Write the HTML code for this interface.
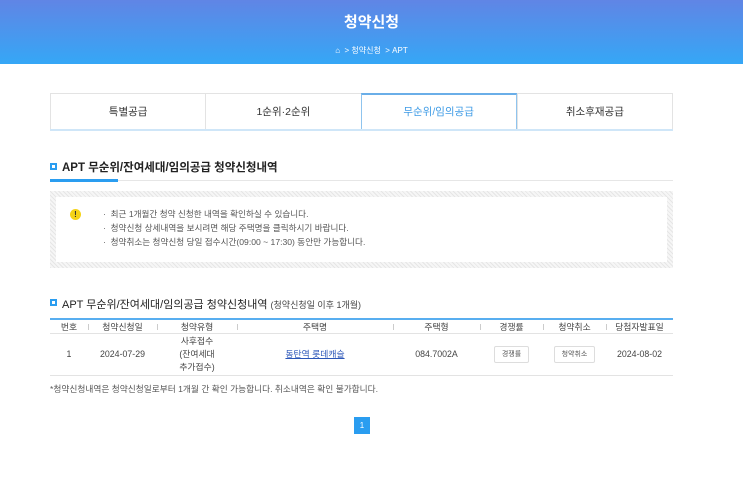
<!DOCTYPE html>
<html><head><meta charset="utf-8"><style>
*{margin:0;padding:0;box-sizing:border-box}
body{width:743px;height:481px;background:#fff;font-family:"Liberation Sans","Noto Sans CJK KR",sans-serif;color:#333;position:relative;overflow:hidden}
.hd{position:absolute;left:0;top:0;width:743px;height:64px;background:linear-gradient(#6085e5,#35a7f6)}
.hd h1{position:absolute;top:11px;width:100%;text-align:center;color:#fff;font-size:15px;font-weight:bold}
.bc{position:absolute;top:45px;width:100%;text-align:center;color:#fff;font-size:8px}
.tabs{position:absolute;left:50px;top:93px;width:623px;height:38px;display:flex;border-bottom:2px solid #cfe6f8}
.tab{flex:1;border:1px solid #e3e3e3;border-right:none;border-bottom:none;text-align:center;line-height:36px;font-size:10.5px;color:#333}
.tab:last-child{border-right:1px solid #e3e3e3}
.tab.on{border:1px solid #8fc4ee;border-top:2px solid #6aaee8;border-bottom:none;color:#3e9be6;line-height:35px}
.sq{position:absolute;width:7px;height:7px;border:2px solid #2a9df0;background:#fff}
.t1{position:absolute;left:62px;top:159px;font-size:11.5px;font-weight:bold;color:#222}
.ul{position:absolute;left:50px;top:180px;width:623px;height:1px;background:#e6e6e6}
.ulb{position:absolute;left:50px;top:179px;width:68px;height:3px;background:#2a9df0}
.box{position:absolute;left:50px;top:191px;width:623px;height:77px;background:repeating-linear-gradient(45deg,#e6e6e6 0 1px,#f6f6f6 1px 3px)}
.inner{position:absolute;left:6px;top:6px;right:6px;bottom:6px;background:#fff}
.warn{position:absolute;left:14px;top:12px;width:11px;height:11px;border-radius:50%;background:#f5d316;color:#333;font-size:8px;font-weight:bold;text-align:center;line-height:11px}
.li{position:absolute;left:47px;font-size:8.6px;color:#555}
.t2{position:absolute;left:62px;top:296px;font-size:11px;color:#222}
.t2 small{font-size:9px;color:#444}
table{position:absolute;left:50px;top:318px;width:623px;border-collapse:collapse;border-top:2px solid #58aef0;font-size:8.8px;color:#444}
th{font-weight:normal;height:14px;background:#fff;position:relative;border-bottom:1px solid #e3e3e3}
th+th:before{content:"";position:absolute;left:0;top:4px;height:6px;width:1px;background:#ccc}
td{text-align:center;height:42px;border-bottom:1px solid #e3e3e3;line-height:13px}
a{color:#2b56b8;text-decoration:underline}
.btn{display:inline-block;border:1px solid #ddd;border-radius:2px;padding:1px 7px;font-size:7px;color:#555;background:#fff}
.note{position:absolute;left:50px;top:382px;font-size:8.7px;color:#555}
.pg{position:absolute;left:354px;top:417px;width:16px;height:17px;background:#2a9df0;color:#fff;font-size:8px;text-align:center;line-height:17px}
</style></head><body>
<div class="hd"><h1>청약신청</h1><div class="bc">⌂ &nbsp;&gt; 청약신청 &nbsp;&gt; APT</div></div>
<div class="tabs"><div class="tab">특별공급</div><div class="tab">1순위·2순위</div><div class="tab on">무순위/임의공급</div><div class="tab">취소후재공급</div></div>
<div class="sq" style="left:50px;top:163px"></div>
<div class="t1">APT 무순위/잔여세대/임의공급 청약신청내역</div>
<div class="ul"></div><div class="ulb"></div>
<div class="box"><div class="inner">
<div class="warn">!</div>
<div class="li" style="top:11px">· &nbsp;최근 1개월간 청약 신청한 내역을 확인하실 수 있습니다.</div>
<div class="li" style="top:25px">· &nbsp;청약신청 상세내역을 보시려면 해당 주택명을 클릭하시기 바랍니다.</div>
<div class="li" style="top:39px">· &nbsp;청약취소는 청약신청 당일 접수시간(09:00 ~ 17:30) 동안만 가능합니다.</div>
</div></div>
<div class="sq" style="left:50px;top:299px"></div>
<div class="t2">APT 무순위/잔여세대/임의공급 청약신청내역 <small>(청약신청일 이후 1개월)</small></div>
<table><tr><th style="width:38px">번호</th><th style="width:69px">청약신청일</th><th style="width:80px">청약유형</th><th style="width:156px">주택명</th><th style="width:87px">주택형</th><th style="width:63px">경쟁률</th><th style="width:63px">청약취소</th><th>당첨자발표일</th></tr>
<tr><td>1</td><td>2024-07-29</td><td>사후접수<br>(잔여세대<br>추가접수)</td><td><a>동탄역 롯데캐슬</a></td><td>084.7002A</td><td><span class="btn">경쟁률</span></td><td><span class="btn">청약취소</span></td><td>2024-08-02</td></tr></table>
<div class="note">*청약신청내역은 청약신청일로부터 1개월 간 확인 가능합니다. 취소내역은 확인 불가합니다.</div>
<div class="pg">1</div>
</body></html>
